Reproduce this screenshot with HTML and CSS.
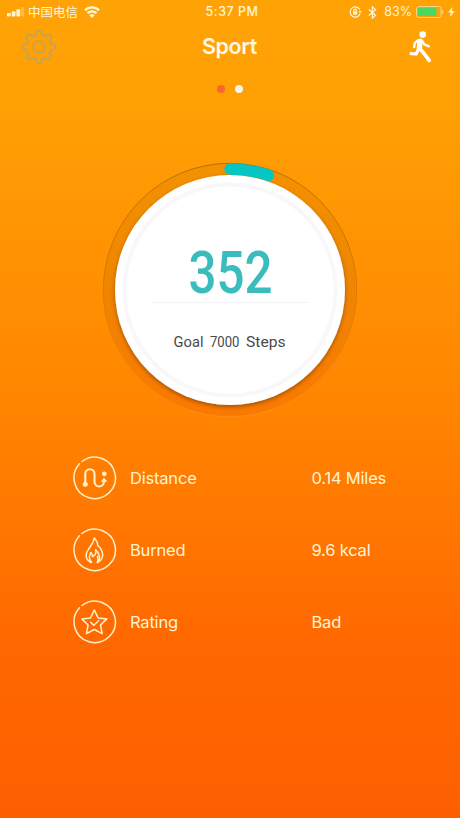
FILE: index.html
```html
<!DOCTYPE html>
<html lang="en">
<head>
  <meta charset="UTF-8">
  <title>Sport</title>
  <meta name="viewport" content="width=device-width, initial-scale=1">
  <link rel="stylesheet" href="styles.css">
</head>
<body>
<div class="screen">
  <!-- Status bar -->
  <div class="status">
    <div class="status-left">
      <svg class="signal" width="18" height="10" viewBox="0 0 18 10" fill="#fff6d8">
        <rect x="0" y="6" width="3.8" height="3.5" rx="1"/>
        <rect x="4.7" y="4.3" width="3.8" height="5.2" rx="1"/>
        <rect x="9.4" y="2.2" width="3.8" height="7.3" rx="1"/>
        <rect x="14" y="0" width="3.2" height="9.5" rx="1" opacity=".3"/>
      </svg>
      <span class="carrier">中国电信</span>
      <svg class="wifi" width="16" height="12" viewBox="0 0 16 12" fill="none" stroke="#fff6d8" stroke-width="2.3">
        <path d="M1 4.4a9.8 9.8 0 0 1 14 0"/>
        <path d="M3.6 7.3a6 6 0 0 1 8.8 0"/>
        <path d="M5.4 9.3a3.6 3.6 0 0 1 5.2 0L8 11.9z" fill="#fff6d8" stroke="none"/>
      </svg>
    </div>
    <span class="time">5:37 PM</span>
    <div class="status-right">
      <svg class="lock" width="13" height="12" viewBox="0 0 13 12" fill="none" stroke="#fff6d8" stroke-width="1.2">
        <path d="M10.9 3.8A5.1 5.1 0 1 0 11.1 7.8"/>
        <path d="M9.4 5h3.4l-1.7 2.3z" fill="#fff6d8" stroke="none"/>
        <rect x="4" y="5.3" width="4.2" height="3.4" fill="#fff6d8" stroke="none"/>
        <path d="M4.8 5.5V4.4a1.3 1.3 0 0 1 2.6 0v1.1"/>
      </svg>
      <svg class="bluetooth" width="9" height="13" viewBox="0 0 9 13" fill="none" stroke="#fff6d8" stroke-width="1.2">
        <path d="M.8 3.5l6.8 5.7-3.2 2.9V.9l3.2 2.9L.8 9.5"/>
      </svg>
      <span class="percent">83%</span>
      <svg class="battery" width="28" height="12" viewBox="0 0 28 12">
        <rect x=".5" y=".5" width="24.5" height="11" rx="2" fill="none" stroke="#ffd67c"/>
        <rect x="2" y="2" width="18.5" height="8" rx=".5" fill="#4cd55f"/>
        <path d="M26 4v4q1.5-.6 1.5-2T26 4z" fill="#ffd67c"/>
      </svg>
      <svg class="bolt" width="7" height="10" viewBox="0 0 7 10" fill="#fff6d8">
        <path d="M4.6 0L0 5.6h2.8L1.9 10 6.8 4.2H3.9z"/>
      </svg>
    </div>
  </div>

  <!-- Title bar -->
  <div class="navbar">
    <svg class="gear" width="36" height="36" viewBox="-18 -18 36 36" fill="none" stroke="#c4a553" stroke-width="2" stroke-linejoin="round">
      <path d="M-3.2-12.2Q-2.6-16.4 0-16.4T3.2-12.2Q5 -10.6 6.4-10.9Q9.8-13.4 11.6-11.6T10.9-6.4Q10.6-5 12.2-3.2Q16.4-2.6 16.4 0T12.2 3.2Q10.6 5 10.9 6.4Q13.4 9.8 11.6 11.6T6.4 10.9Q5 10.6 3.2 12.2Q2.6 16.4 0 16.4T-3.2 12.2Q-5 10.6-6.4 10.9Q-9.8 13.4-11.6 11.6T-10.9 6.4Q-10.6 5-12.2 3.2Q-16.4 2.6-16.4 0T-12.2-3.2Q-10.6-5-10.9-6.4Q-13.4-9.8-11.6-11.6T-6.4-10.9Q-5-10.6-3.2-12.2Z"/>
      <circle r="5.8"/>
    </svg>
    <h1 class="title">Sport</h1>
    <svg class="runner" width="24" height="34" viewBox="0 0 24 34" fill="none" stroke="#fff" stroke-linecap="round" stroke-linejoin="round">
      <circle cx="13.7" cy="4.6" r="3.3" fill="#fff" stroke="none"/>
      <path d="M10.9 11.2L10.4 18.4" stroke-width="5.4"/>
      <path d="M8.4 10.5L5.7 13.2L5.2 17.2" stroke-width="2.3"/>
      <path d="M12.8 10.4L15.3 14.3L20 16.3" stroke-width="2.4"/>
      <path d="M10.5 18.5L14.6 23L20.2 30.4" stroke-width="3.7"/>
      <path d="M9 20L7.2 24L2 23.6" stroke-width="3.1"/>
    </svg>
  </div>

  <div class="pager">
    <span class="dot active"></span>
    <span class="dot"></span>
  </div>

  <!-- Step gauge -->
  <svg class="gauge" width="270" height="270" viewBox="-135 -135 270 270">
    <defs>
      <linearGradient id="track" x1="0" y1="0" x2="0" y2="1">
        <stop offset="0" stop-color="#f39200"/>
        <stop offset=".5" stop-color="#ef8500"/>
        <stop offset="1" stop-color="#fa7900"/>
      </linearGradient>
      <linearGradient id="edge" x1="0" y1="0" x2="0" y2="1">
        <stop offset="0" stop-color="#b96c00"/>
        <stop offset=".55" stop-color="#df7c00"/>
        <stop offset="1" stop-color="#ff8b18"/>
      </linearGradient>
      <filter id="shadow" x="-10%" y="-10%" width="120%" height="120%">
        <feDropShadow dx="0" dy="2" stdDeviation="2" flood-color="#7a3a00" flood-opacity=".65"/>
      </filter>
    </defs>
    <circle r="126.7" fill="url(#track)" stroke="url(#edge)" stroke-width="1"/>
    <circle r="115" fill="#fff" filter="url(#shadow)"/>
    <circle r="105.5" fill="none" stroke="#f8f8fa" stroke-width="4"/>
    <path d="M0-121A121 121 0 0 1 38.4-114.7" fill="none" stroke="#06c6c3" stroke-width="11.5" stroke-linecap="round"/>
    <text class="steps" x="-41.5" y="2.5" textLength="84" lengthAdjust="spacingAndGlyphs">352</text>
    <path d="M-78 12.5H78" stroke="#f3f3f3"/>
    <text class="goal" y="56.5"><tspan x="-56.5" textLength="30" lengthAdjust="spacingAndGlyphs">Goal</tspan> <tspan x="-20" textLength="29.5" lengthAdjust="spacingAndGlyphs">7000</tspan> <tspan x="16" textLength="39.5" lengthAdjust="spacingAndGlyphs">Steps</tspan></text>
  </svg>

  <!-- Today's figures -->
  <div class="stats">
    <div class="row">
      <svg class="icon" width="44" height="44" viewBox="-21.5 -22 44 44">
        <path class="ring" d="M-12.5-16.5A20.7 20.7 0 1 1-15-14.2"/>
        <path class="route" d="M-9.2 5.5V-4.2a4.6 4.6 0 0 1 9.2 0V3.8a4.7 4.7 0 0 0 9.4 0V2"/>
        <circle class="spot" cx="-9.2" cy="6.3" r="2.5"/>
        <circle class="spot" cx="9.8" cy="-4.2" r="2.4"/>
        <path class="spot" d="M6.2 3.8L9.5-.2L12.8 3.8z"/>
      </svg>
      <span class="label">Distance</span>
      <span class="value">0.14 Miles</span>
    </div>
    <div class="row">
      <svg class="icon" width="44" height="44" viewBox="-21.5 -22 44 44">
        <path class="ring" d="M-12.5-16.5A20.7 20.7 0 1 1-15-14.2"/>
        <path class="line" d="M-3.5 12.5C-8 10-9.5 6.2-7.5 1.8C-5.7-2.5-1.2-5.5-.2-12C2.5-9 3.4-6.5 3.2-4.3C5.5-3 8.2 1 8.2 5C8.2 8.5 6 11 3 12.6"/>
        <path class="line" d="M-2.8 12.2C-6.5 8-4.8 5.5-3.7 2.5C-2.3 4-1.8 5-1.8 6.7C1.3 5 2 2.6 1.1-.2C4.8 2.8 7 9 2.8 12.2C4 9.6 3.8 8 3 6.5"/>
      </svg>
      <span class="label">Burned</span>
      <span class="value">9.6 kcal</span>
    </div>
    <div class="row">
      <svg class="icon" width="44" height="44" viewBox="-21.5 -22 44 44">
        <path class="ring" d="M-12.5-16.5A20.7 20.7 0 1 1-15-14.2"/>
        <path class="line" d="M-.2-12L3.6-4.1L12.3-3.1L6 3L7.7 11.7L-.2 7.5L-8.1 11.7L-6.4 3L-12.7-3.1L-4-4.1Z"/>
        <path class="line" d="M-3.8.3L-.7 3.2L4.2-1.5"/>
      </svg>
      <span class="label">Rating</span>
      <span class="value">Bad</span>
    </div>
  </div>
</div>
</body>
</html>
```

FILE: styles.css
```css
body {
  margin: 0;
  font-family: Inter, "Noto Sans CJK SC", sans-serif;
}
.screen {
  box-sizing: border-box;
  width: 460px;
  height: 818px;
  overflow: hidden;
  background: linear-gradient(180deg, #ffa305 0%, #ffa005 13%, #ff8300 52%, #ff6900 78%, #fd5f00 100%);
  color: #fff3d6;
}
.status {
  display: grid;
  grid-template-columns: 1fr auto 1fr;
  align-items: center;
  height: 24px;
  padding: 0 5px 0 7px;
  font-size: 12.5px;
  line-height: 24px;
}
.status-left,
.status-right {
  display: flex;
  align-items: center;
}
.status-right {
  justify-content: flex-end;
}
.carrier {
  margin: 0 6px 0 3px;
  font-family: "Noto Sans CJK SC", sans-serif;
}
.time {
  padding-left: 2px;
  font-weight: 500;
  letter-spacing: 0.5px;
}
.bluetooth {
  margin: 0 7px 0 6px;
}
.percent {
  margin-right: 4px;
  font-size: 12.5px;
}
.bolt {
  margin-left: 4px;
}
.navbar {
  display: grid;
  grid-template-columns: 1fr auto 1fr;
  align-items: center;
  height: 46px;
  padding: 0 27px 0 21px;
}
.title {
  margin: -2px 0 0;
  padding-right: 1px;
  padding-left: 6px;
  font-size: 21.5px;
  font-weight: 600;
  line-height: 44px;
  letter-spacing: -0.4px;
  color: #fff8e4;
}
.runner {
  justify-self: end;
}
.pager {
  display: flex;
  justify-content: center;
  gap: 10px;
  padding-top: 15px;
}
.dot {
  width: 8px;
  height: 8px;
  border-radius: 50%;
  background: #f6f2ee;
}
.dot.active {
  background: #ff652b;
}
.gauge {
  display: block;
  margin: 61.5px auto 0;
}
.steps {
  font-family: Roboto, sans-serif;
  font-size: 59px;
  font-weight: 500;
  fill: #3bbcbc;
}
.goal {
  font-family: Roboto, sans-serif;
  font-size: 15px;
  fill: #4a4a4a;
}
.stats {
  display: flex;
  flex-direction: column;
  gap: 28.2px;
  margin-top: 31.4px;
  padding-left: 72.5px;
}
.row {
  display: grid;
  grid-template-columns: 44px 168px auto;
  column-gap: 13.5px;
  align-items: center;
  height: 44px;
  font-size: 16.5px;
  letter-spacing: -0.2px;
}
.icon {
  fill: none;
  stroke: #fff0cc;
  stroke-linecap: round;
  stroke-linejoin: round;
}
.ring {
  stroke-width: 1.5;
}
.line {
  stroke-width: 1.5;
}
.route {
  stroke-width: 2.1;
}
.spot {
  fill: #fff0cc;
  stroke: none;
}
```
